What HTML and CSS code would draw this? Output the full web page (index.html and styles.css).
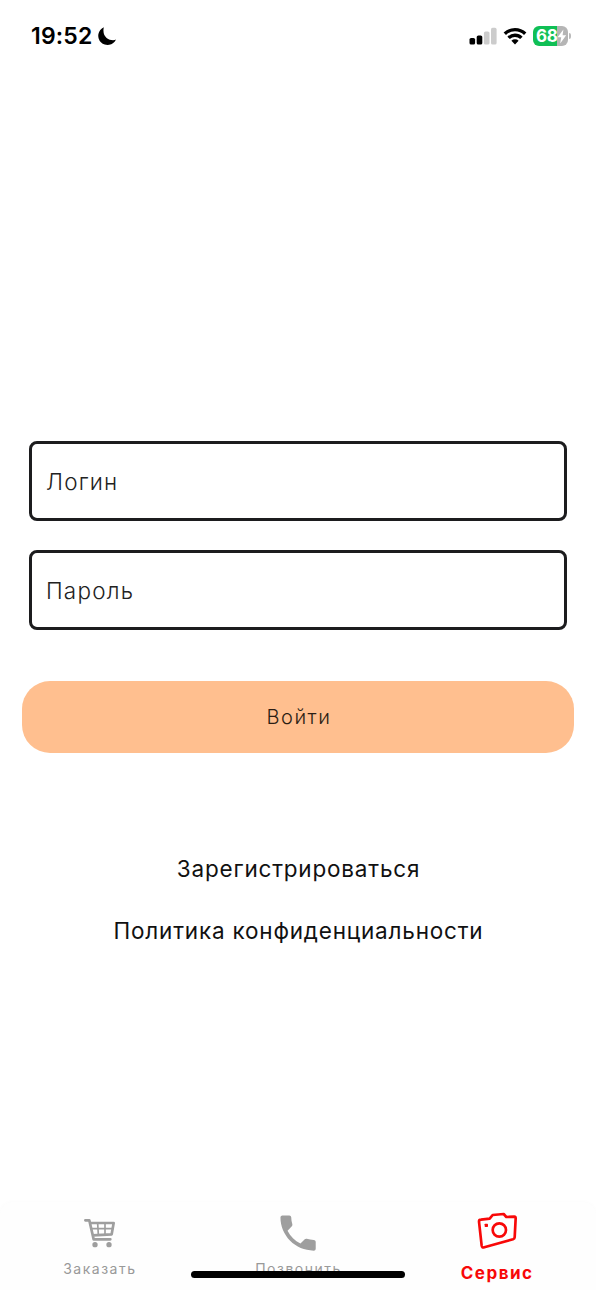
FILE: index.html
```html
<!DOCTYPE html>
<html lang="ru">
<head>
  <meta charset="UTF-8"/>
  <title>Сервис – Вход</title>
  <meta name="viewport" content="width=device-width, initial-scale=1.0"/>
  <link rel="stylesheet" href="styles.css">
</head>
<body>

  <header class="status-bar">
    <div class="status-left">
      <span class="time">19:52</span>
      <svg class="moon" width="20" height="20" viewBox="0 0 20 20"><path d="M6.8 1.2A9.3 9.3 0 1 0 19 13.6C14.5 15.6 4.4 12.5 6.8 1.2z"/></svg>
    </div>
    <div class="status-right">
      <svg width="28" height="18" viewBox="0 0 28 18">
        <rect x="0.5" y="11" width="5.6" height="6.5" rx="1.6"/>
        <rect x="7.7" y="8.5" width="5.6" height="9" rx="1.6"/>
        <rect x="14.9" y="4.5" width="5.6" height="13" rx="1.6" fill="#ccc"/>
        <rect x="22" y="0.8" width="5.6" height="16.7" rx="1.6" fill="#ccc"/>
      </svg>
      <svg class="wifi" width="24" height="18" viewBox="0 0 24 18">
        <g fill="none" stroke="#000" stroke-width="3.4">
          <path d="M1.8 6.7a14.8 14.8 0 0 1 20.4 0"/>
          <path d="M5.6 10.9a9 9 0 0 1 12.8 0"/>
        </g>
        <path d="M8.4 13.8a5.2 5.2 0 0 1 7.2 0L12 17.4z"/>
      </svg>
      <div class="battery">
        <span class="battery-level">68</span>
        <svg class="bolt" width="10" height="15" viewBox="0 0 10 15"><path d="M6.4 0.5L0.6 8.3h3.6L3.2 14.5l6-8.2H5.6z"/></svg>
      </div>
      <span class="battery-tip"></span>
    </div>
  </header>

  <main class="login">
    <form class="login-form">
      <input class="field" type="text" placeholder="Логин"/>
      <input class="field" type="password" placeholder="Пароль"/>
      <button class="submit" type="button">Войти</button>
    </form>
    <nav class="links">
      <a href="#">Зарегистрироваться</a>
      <a href="#">Политика конфиденциальности</a>
    </nav>
  </main>

  <footer class="tab-bar">
    <a class="tab" href="#">
      <svg class="tab-icon" width="60" height="50" viewBox="208 45 180 150">
        <g fill="none" stroke="#9e9e9e" stroke-linecap="round" stroke-linejoin="round">
          <path stroke-width="8" d="M257 91h12l13 57h50M273 99h69l-6 34-57 3"/>
          <path stroke-width="5" d="M275 116h64M294 100l2 34M316 100v34"/>
        </g>
        <circle cx="286" cy="164" r="8" fill="#9e9e9e"/>
        <circle cx="328" cy="164" r="8" fill="#9e9e9e"/>
      </svg>
      <span class="tab-label">Заказать</span>
    </a>
    <a class="tab" href="#">
      <svg class="tab-icon" width="47" height="50" viewBox="-0.3 -1.5 24 25.53"><path fill="#9e9e9e" d="M6.62 11.59c1.44 2.83 3.76 5.14 6.59 6.59l2.2-2.2c.27-.27.67-.36 1.02-.24 1.12.37 2.33.57 3.57.57.55 0 1 .45 1 1V20.8c0 .55-.45 1-1 1-9.39 0-17-7.61-17-17 0-.55.45-1 1-1h3.5c.55 0 1 .45 1 1 0 1.25.2 2.45.57 3.57.11.35.03.74-.25 1.02z"/></svg>
      <span class="tab-label">Позвонить</span>
    </a>
    <a class="tab active" href="#">
      <svg class="tab-icon" width="60" height="50" viewBox="202 46 180 150">
        <g fill="none" stroke="#f80808" stroke-width="8" stroke-linejoin="round">
          <path d="M244 90l26-3 9-11 33-3 8 9 24-1q4 0 4 5l-3 57q0 4-5 6l-86 24q-7 2-8-5l-8-72q0-6 6-6z"/>
          <circle cx="299" cy="121" r="20"/>
        </g>
        <rect x="255" y="102" width="10" height="10" rx="2" fill="#f80808"/>
      </svg>
      <span class="tab-label">Сервис</span>
    </a>
    <span class="home-indicator"></span>
  </footer>

</body>
</html>
```
FILE: styles.css
```css
* {
  box-sizing: border-box;
}
body {
  margin: 0;
  height: 1290px;
  display: flex;
  flex-direction: column;
  background-color: #fff;
  color: #111;
  font-family: Inter, "Liberation Sans", sans-serif;
  overflow: hidden;
}
a {
  color: inherit;
  text-decoration: none;
}
svg {
  display: block;
}
.status-bar {
  height: 72px;
  padding: 0 25px 0 31px;
  display: flex;
  align-items: center;
  justify-content: space-between;
  color: #000;
}
.status-left, .status-right {
  display: flex;
  align-items: center;
}
.time {
  font-size: 23px;
  font-weight: 600;
  letter-spacing: 0.2px;
}
.moon {
  margin-left: 4px;
}
.wifi {
  margin: 0 6px 0 6px;
}
.battery {
  width: 35px;
  height: 20px;
  padding-left: 3px;
  display: flex;
  align-items: center;
  border-radius: 6px;
  background: linear-gradient(to right, #10bf55 24px, #b5b5b5 24px);
  color: #fff;
}
.battery-level {
  font-size: 17px;
  font-weight: 700;
  line-height: 20px;
  letter-spacing: -0.4px;
}
.bolt {
  fill: #fff;
}
.battery-tip {
  width: 2px;
  height: 6px;
  margin-left: 1px;
  border-radius: 0 2px 2px 0;
  background-color: #bbb;
}
.login {
  flex: 1;
  padding: 369px 22px 0;
}
.login-form {
  display: flex;
  flex-direction: column;
}
.field {
  height: 80px;
  margin: 0 7px 29px;
  padding: 0 15px 0 14px;
  border: 3px solid #1c1c1e;
  border-radius: 8px;
  background-color: #fff;
  font-family: inherit;
  font-size: 22.5px;
  font-weight: 300;
  letter-spacing: 1.2px;
}
.field::placeholder {
  color: #222;
  opacity: 1;
}
.submit {
  height: 72px;
  margin-top: 22px;
  padding: 0 0 0 2px;
  border: none;
  border-radius: 28px;
  background-color: #ffbf8f;
  color: #2b1d14;
  font-family: inherit;
  font-size: 20px;
  font-weight: 350;
  letter-spacing: 1.5px;
}
.links {
  margin-top: 101px;
  padding-left: 1px;
  display: flex;
  flex-direction: column;
  align-items: center;
  gap: 32px;
  font-size: 22.5px;
  font-weight: 370;
  line-height: 30px;
  letter-spacing: 0.8px;
}
.tab-bar {
  position: relative;
  height: 88px;
  padding-top: 3px;
  display: grid;
  grid-template-columns: repeat(3, 1fr);
  border-radius: 14px 14px 0 0;
  background-color: #fefefe;
  box-shadow: 0 0 5px rgba(0, 0, 0, 0.025);
}
.tab {
  display: flex;
  flex-direction: column;
  align-items: center;
  color: #999;
}
.tab-label {
  margin-top: 5px;
  padding-left: 1px;
  font-size: 14px;
  line-height: 18px;
  letter-spacing: 1.5px;
}
.tab.active {
  color: #f80808;
}
.tab.active .tab-label {
  margin-top: 9px;
  font-size: 17px;
  font-weight: 700;
  letter-spacing: 1.5px;
}
/* drawn over the tab labels */
.home-indicator {
  position: absolute;
  left: 191px;
  bottom: 12px;
  width: 214px;
  height: 7px;
  border-radius: 4px;
  background-color: #000;
}
```
